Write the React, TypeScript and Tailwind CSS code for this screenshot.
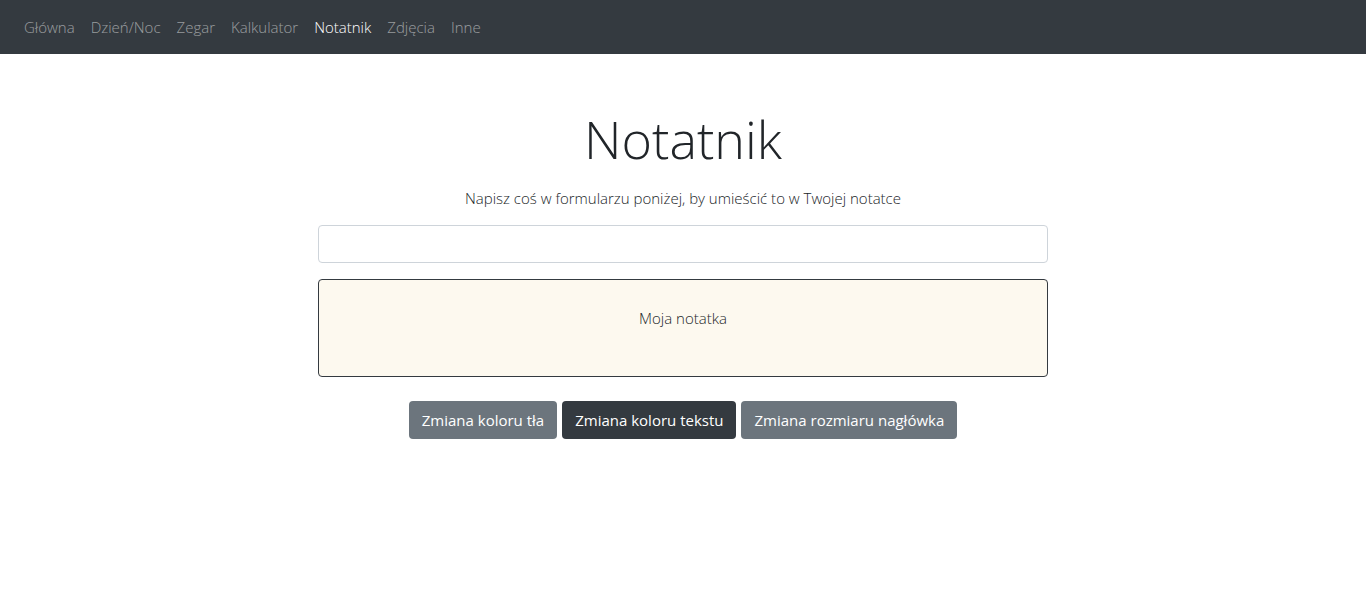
import { useState } from "react";

const links = ["Główna", "Dzień/Noc", "Zegar", "Kalkulator", "Notatnik", "Zdjęcia", "Inne"];

export default function App() {
  const [text, setText] = useState("");

  return (
    <div className="min-h-screen bg-white text-[#212529]" style={{ fontFamily: "'Open Sans', 'Noto Sans', sans-serif" }}>
      <nav className="flex h-[54px] items-center bg-[#343a40] px-4">
        {links.map((l) => (
          <a
            key={l}
            href="#"
            className={`px-2 text-[15px] font-light ${l === "Notatnik" ? "text-white" : "text-white/50"}`}
          >
            {l}
          </a>
        ))}
      </nav>

      <main className="mx-auto flex w-[730px] flex-col items-center">
        <h1 className="mt-[54px] text-[52px] font-light leading-[1.2] text-[#212529]">Notatnik</h1>
        <p className="mt-[17px] text-[15px] font-light">Napisz coś w formularzu poniżej, by umieścić to w Twojej notatce</p>

        <input
          value={text}
          onChange={(e) => setText(e.target.value)}
          className="mt-[15px] h-[38px] w-full rounded-[4px] border border-[#ced4da] bg-white px-3 text-base outline-none"
        />

        <div className="mt-[16px] flex h-[98px] w-full justify-center rounded-[4px] border border-[#343a40] bg-[#fdf9ef] pt-[27px]">
          <span className="text-[15px] font-light">{text || "Moja notatka"}</span>
        </div>

        <div className="mt-[24px] flex gap-[5px]">
          <button className="h-[38px] rounded-[4px] bg-[#6c757d] px-[13px] text-[15px] text-white">Zmiana koloru tła</button>
          <button className="h-[38px] rounded-[4px] bg-[#343a40] px-[13px] text-[15px] text-white">Zmiana koloru tekstu</button>
          <button className="h-[38px] rounded-[4px] bg-[#6c757d] px-[13px] text-[15px] text-white">Zmiana rozmiaru nagłówka</button>
        </div>
      </main>
    </div>
  );
}
